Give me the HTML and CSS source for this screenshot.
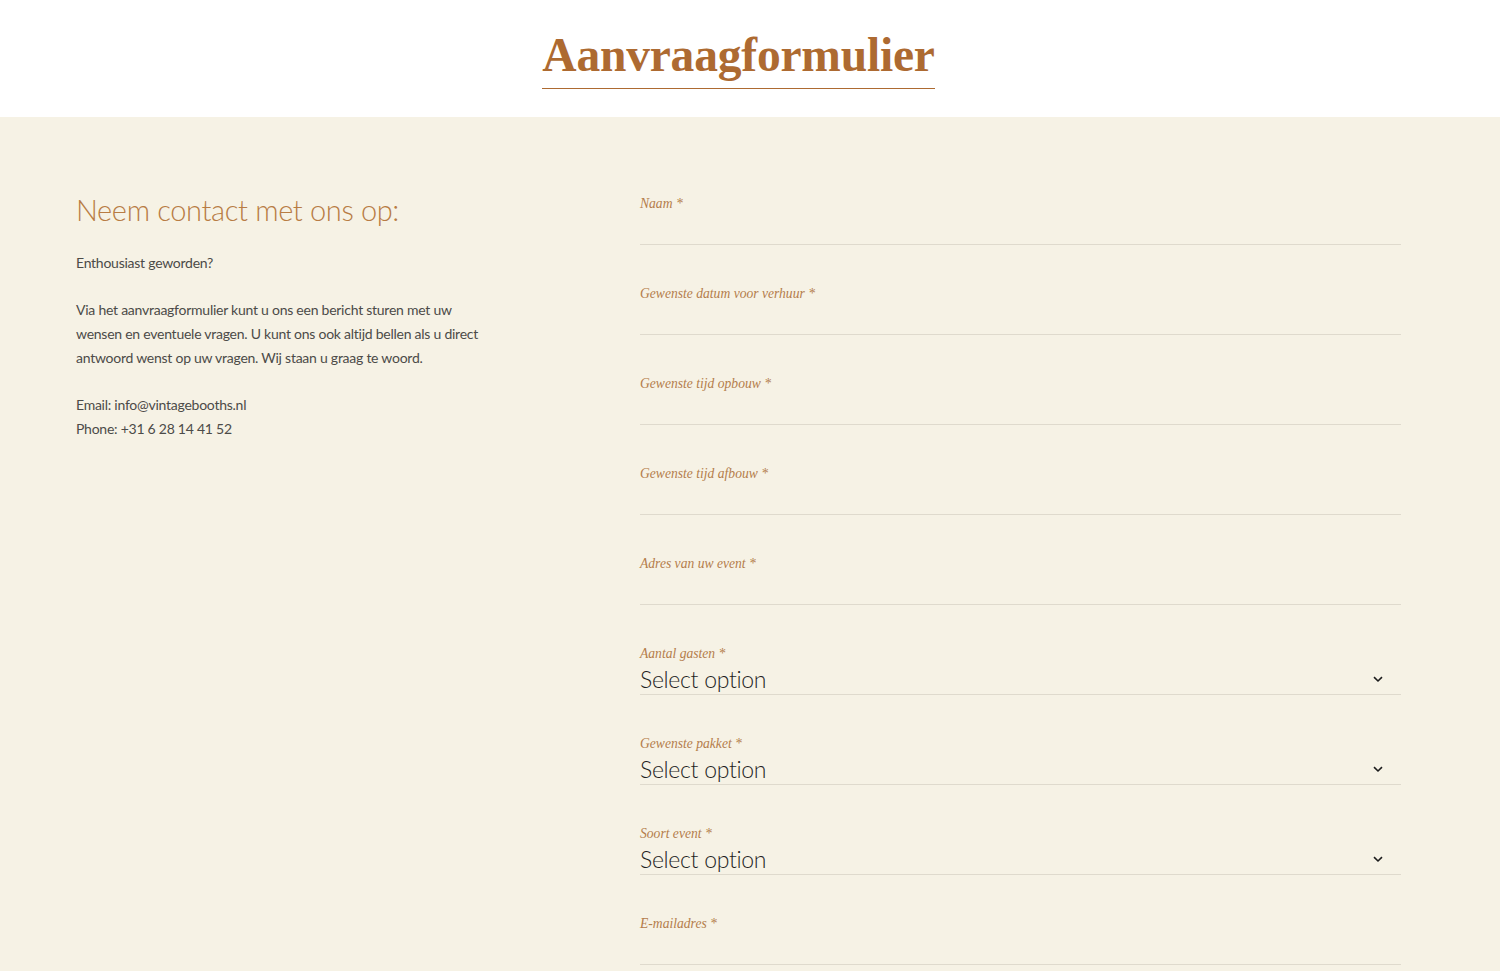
FILE: index.html
```html
<!DOCTYPE html>
<html lang="nl">
<head>
<meta charset="utf-8">
<title>Aanvraagformulier</title>
<link rel="stylesheet" href="styles.css">
</head>
<body>
<header class="top">
  <h1 class="title">Aanvraagformulier</h1>
</header>
<main class="content">
  <section class="info">
    <h2 class="info-heading">Neem contact met ons op:</h2>
    <p>Enthousiast geworden?</p>
    <p>Via het aanvraagformulier kunt u ons een bericht sturen met uw wensen en eventuele vragen. U kunt ons ook altijd bellen als u direct antwoord wenst op uw vragen. Wij staan u graag te woord.</p>
    <p>Email: info@vintagebooths.nl<br>Phone: +31 6 28 14 41 52</p>
  </section>
  <form class="form">
    <div class="field"><label class="label">Naam *</label><div class="input"></div></div>
    <div class="field"><label class="label">Gewenste datum voor verhuur *</label><div class="input"></div></div>
    <div class="field"><label class="label">Gewenste tijd opbouw *</label><div class="input"></div></div>
    <div class="field"><label class="label">Gewenste tijd afbouw *</label><div class="input"></div></div>
    <div class="field"><label class="label">Adres van uw event *</label><div class="input"></div></div>
    <div class="field"><label class="label">Aantal gasten *</label><div class="input select"><span>Select option</span><svg class="chev" width="10" height="7" viewBox="0 0 10 7"><path d="M1 1.2 L5 5 L9 1.2" fill="none" stroke="#1c1c1c" stroke-width="1.6"/></svg></div></div>
    <div class="field"><label class="label">Gewenste pakket *</label><div class="input select"><span>Select option</span><svg class="chev" width="10" height="7" viewBox="0 0 10 7"><path d="M1 1.2 L5 5 L9 1.2" fill="none" stroke="#1c1c1c" stroke-width="1.6"/></svg></div></div>
    <div class="field"><label class="label">Soort event *</label><div class="input select"><span>Select option</span><svg class="chev" width="10" height="7" viewBox="0 0 10 7"><path d="M1 1.2 L5 5 L9 1.2" fill="none" stroke="#1c1c1c" stroke-width="1.6"/></svg></div></div>
    <div class="field"><label class="label">E-mailadres *</label><div class="input"></div></div>
  </form>
</main>
</body>
</html>
```
FILE: styles.css
```css
html, body {
  margin: 0;
  padding: 0;
  background: #f6f2e5;
}
body {
  font-family: Lato, "Liberation Sans", sans-serif;
}
.top {
  background: #ffffff;
  height: 117px;
  display: flex;
  justify-content: center;
  align-items: flex-start;
  padding-right: 23px;
}
.title {
  margin: 28px 0 0;
  font-family: "Liberation Serif", serif;
  font-weight: bold;
  font-size: 47.5px;
  line-height: 54px;
  color: #ad6a31;
  letter-spacing: -0.2px;
  padding-bottom: 6px;
  border-bottom: 1px solid #ad6a31;
}
.content {
  display: flex;
  padding: 75px 99px 0 76px;
  min-height: 800px;
}
.info {
  width: 564px;
  flex-shrink: 0;
}
.info-heading {
  margin: 0 0 23px;
  font-family: Lato, sans-serif;
  font-weight: 300;
  font-size: 29px;
  line-height: 36px;
  color: #b87c44;
  letter-spacing: -0.35px;
}
.info p {
  margin: 0 0 23.5px;
  max-width: 410px;
  font-size: 14px;
  line-height: 23.7px;
  letter-spacing: -0.25px;
  color: #4c4b48;
}
.form {
  flex: 1;
  padding-top: 2px;
}
.field {
  margin-bottom: 39px;
}
.label {
  display: block;
  font-family: "Liberation Serif", serif;
  font-style: italic;
  font-size: 13.6px;
  line-height: 20px;
  color: #b47d4b;
}
.input {
  height: 30px;
  border-bottom: 1px solid #dfdacd;
}
.select {
  display: flex;
  align-items: center;
  justify-content: space-between;
  font-family: Lato, sans-serif;
  font-weight: 300;
  font-size: 23px;
  color: #1f1f1f;
  letter-spacing: -0.3px;
}
.chev {
  margin-right: 18px;
}
```
